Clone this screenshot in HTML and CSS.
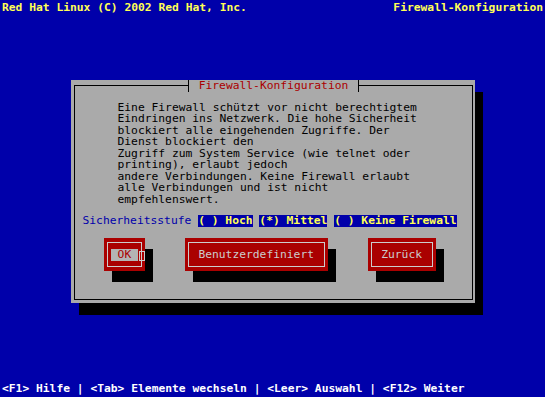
FILE: index.html
```html
<!DOCTYPE html>
<html lang="de">
<head>
    <meta charset="UTF-8">
    <meta name="viewport" content="width=device-width, initial-scale=1.0">
    <title>Firewall-Konfiguration</title>
    <link rel="stylesheet" href="styles.css">
</head>
<body>
    <div class="screen">
        <header class="topbar">
            <span>Red Hat Linux (C) 2002 Red Hat, Inc.</span>
            <span>Firewall-Konfiguration</span>
        </header>

        <main class="stage">
            <div class="dialog">
                <fieldset class="frame">
                    <legend class="title">Firewall-Konfiguration</legend>

                    <p class="message">Eine Firewall schützt vor nicht berechtigtem<br>Eindringen ins Netzwerk. Die hohe Sicherheit<br>blockiert alle eingehenden Zugriffe. Der<br>Dienst blockiert den<br>Zugriff zum System Service (wie telnet oder<br>printing), erlaubt jedoch<br>andere Verbindungen. Keine Firewall erlaubt<br>alle Verbindungen und ist nicht<br>empfehlenswert.</p>

                    <div class="level">
                        <span class="level-label">Sicherheitsstufe</span>
                        <span class="radio">( ) Hoch</span>
                        <span class="radio">(*) Mittel</span>
                        <span class="radio">( ) Keine Firewall</span>
                    </div>

                    <div class="buttons">
                        <button class="btn btn-focus">
                            <span class="btn-frame"><span class="btn-label">OK</span></span>
                            <span class="cursor"></span>
                        </button>
                        <button class="btn">
                            <span class="btn-frame"><span class="btn-label">Benutzerdefiniert</span></span>
                        </button>
                        <button class="btn">
                            <span class="btn-frame"><span class="btn-label">Zurück</span></span>
                        </button>
                    </div>
                </fieldset>
            </div>
        </main>

        <footer class="hints">&lt;F1&gt; Hilfe | &lt;Tab&gt; Elemente wechseln | &lt;Leer&gt; Auswahl | &lt;F12&gt; Weiter</footer>
    </div>
</body>
</html>
```

FILE: styles.css
```css
body {
    margin: 0;
    background-color: #0000aa;
    font-family: "DejaVu Sans Mono", monospace;
    font-size: 11.31px;
    line-height: 11.5px;
}

.screen {
    display: flex;
    flex-direction: column;
    width: 545px;
    height: 397px;
}

.topbar {
    display: flex;
    justify-content: space-between;
    padding: 1.5px 2px 0 2px;
    color: #ffff55;
    font-weight: bold;
    white-space: pre;
}

.stage {
    padding: 67px 0 0 71px;
}

.dialog {
    width: 399px;
    padding: 0 2px 3px 3px;
    background-color: #aaaaaa;
    box-shadow: 8px 12px 0 #000;
}

.frame {
    margin: 0;
    padding: 0 0 28px 0;
    border: 1px solid #000;
}

.title {
    margin: 0 auto;
    padding: 0 9.5px;
    border-left: 1px solid #000;
    border-right: 1px solid #000;
    color: #aa0000;
    white-space: pre;
}

.message {
    margin: 10px 0 0 42.5px;
    color: #000;
    white-space: nowrap;
}

.level {
    display: flex;
    gap: 6.81px;
    margin: 10px 0 0 7.5px;
    white-space: pre;
}

.level-label {
    color: #0000aa;
}

.radio {
    background-color: #0000aa;
    color: #ffff55;
    font-weight: bold;
}

.buttons {
    display: flex;
    gap: 40px;
    margin-top: 11.5px;
    padding-left: 29px;
}

.btn {
    position: relative;
    display: block;
    padding: 4px 3px;
    border: none;
    background-color: #aa0000;
    box-shadow: 8px 11px 0 #000;
    font: inherit;
    color: #cccccc;
    cursor: pointer;
}

.btn-frame {
    display: block;
    padding: 6px 2.8px 5.5px 2.8px;
    border: 1px solid #cccccc;
}

.btn-label {
    display: block;
    padding: 0 6.81px;
    white-space: pre;
}

.btn-focus .btn-label {
    background-color: #b4b4b4;
    color: #aa0000;
}

.cursor {
    position: absolute;
    left: 35px;
    top: 13px;
    width: 4px;
    height: 8px;
    border: 1px solid #cccccc;
}

.hints {
    margin-top: auto;
    padding: 0 2px 2.5px 2px;
    color: #ffffff;
    font-weight: bold;
    white-space: pre;
}
```
